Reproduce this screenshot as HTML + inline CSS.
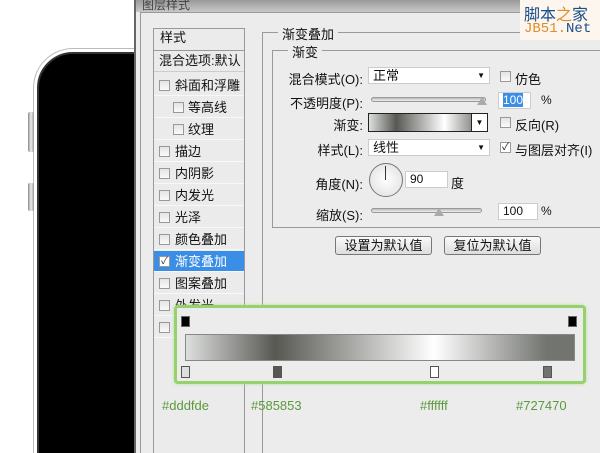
<!DOCTYPE html><html><head><meta charset="utf-8"><style>
*{margin:0;padding:0;box-sizing:border-box}
html,body{width:600px;height:453px;overflow:hidden}
body{background:#fff;position:relative;font-family:"Liberation Sans","Noto Sans CJK SC",sans-serif;font-size:12px;color:#111}
.a{position:absolute}
.cb{position:absolute;width:11px;height:11px;border:1px solid #999;background:linear-gradient(#e4e4e4,#fafafa)}
.it{position:absolute;left:154px;width:90px;height:21px;border-bottom:1px solid #f8f8f8;line-height:21px;font-size:13px}
.lbl{position:absolute;text-align:right;width:100px;left:263px;font-size:13px}
.in{position:absolute;background:#fff;border:1px solid #ccc;height:17px;line-height:15px;padding-left:4px}
.btn{position:absolute;height:19px;border:1px solid #777;border-radius:3px;background:linear-gradient(#fafafa,#ddd);text-align:center;line-height:17px;font-size:13px}
.hx{position:absolute;top:398px;color:#5b9a3c;font-size:13px}
</style></head><body>
<div class="a" style="left:33px;top:48px;width:130px;height:410px;border:1px solid #bbb;border-radius:40px 0 0 0;background:#fff"></div>
<div class="a" style="left:37px;top:52px;width:120px;height:410px;border-radius:36px 0 0 0;background:#000;border:2px solid #333"></div>
<div class="a" style="left:28px;top:112px;width:6px;height:40px;background:linear-gradient(90deg,#888,#eee,#999);border-radius:2px"></div>
<div class="a" style="left:28px;top:183px;width:6px;height:28px;background:linear-gradient(90deg,#888,#eee,#999);border-radius:2px"></div>
<div class="a" style="left:134px;top:0;width:466px;height:453px;background:#ececec;border-left:2px solid #666"></div>
<div class="a" style="left:136px;top:0;width:464px;height:12px;background:linear-gradient(#999,#c8c8c8)"></div>
<div class="a" style="left:142px;top:-4px;color:#444">图层样式</div>
<div class="a" style="left:140px;top:12px;width:460px;height:441px;border-left:1px solid #999;border-top:1px solid #999"></div>
<div class="a" style="left:153px;top:28px;width:92px;height:425px;border-left:1px solid #999;border-right:1px solid #999;background:#ebebeb"></div>
<div class="a" style="left:154px;top:28px;width:90px;height:20px;border-top:1px solid #999;padding-left:6px;line-height:18px;font-size:13px">样式</div>
<div class="a" style="left:154px;top:50px;width:90px;height:22px;border-top:1px solid #999;border-bottom:1px solid #ccc;padding-left:5px;line-height:20px;font-size:13px">混合选项:默认</div>
<div class="it" style="top:75px"><span class="cb" style="left:5px;top:5px"></span><span class="a" style="left:21px">斜面和浮雕</span></div>
<div class="it" style="top:97px"><span class="cb" style="left:19px;top:5px"></span><span class="a" style="left:34px">等高线</span></div>
<div class="it" style="top:119px"><span class="cb" style="left:19px;top:5px"></span><span class="a" style="left:34px">纹理</span></div>
<div class="it" style="top:141px"><span class="cb" style="left:5px;top:5px"></span><span class="a" style="left:21px">描边</span></div>
<div class="it" style="top:163px"><span class="cb" style="left:5px;top:5px"></span><span class="a" style="left:21px">内阴影</span></div>
<div class="it" style="top:185px"><span class="cb" style="left:5px;top:5px"></span><span class="a" style="left:21px">内发光</span></div>
<div class="it" style="top:207px"><span class="cb" style="left:5px;top:5px"></span><span class="a" style="left:21px">光泽</span></div>
<div class="it" style="top:229px"><span class="cb" style="left:5px;top:5px"></span><span class="a" style="left:21px">颜色叠加</span></div>
<div class="it" style="top:251px;background:#3a8ee6;color:#fff"><span class="cb" style="left:5px;top:5px;background:#fff;color:#333;font-size:10px;line-height:9px;text-align:center">✓</span><span class="a" style="left:21px">渐变叠加</span></div>
<div class="it" style="top:273px"><span class="cb" style="left:5px;top:5px"></span><span class="a" style="left:21px">图案叠加</span></div>
<div class="it" style="top:295px"><span class="cb" style="left:5px;top:5px"></span><span class="a" style="left:21px">外发光</span></div>
<div class="it" style="top:317px"><span class="cb" style="left:5px;top:5px"></span></div>
<div class="a" style="left:262px;top:32px;width:338px;height:421px;border-left:1px solid #999;border-top:1px solid #999"></div>
<div class="a" style="left:278px;top:24px;background:#ececec;padding:0 4px;font-size:13px">渐变叠加</div>
<div class="a" style="left:272px;top:50px;width:330px;height:178px;border:1px solid #999"></div>
<div class="a" style="left:288px;top:42px;background:#ececec;padding:0 4px;font-size:13px">渐变</div>
<div class="lbl" style="top:69px">混合模式(O):</div>
<div class="in" style="left:368px;top:67px;width:122px;font-size:13px">正常<span class="a" style="right:4px;top:0;font-size:8px">▼</span></div>
<span class="cb" style="left:500px;top:71px"></span><div class="a" style="left:515px;top:69px;font-size:13px">仿色</div>
<div class="lbl" style="top:93px">不透明度(P):</div>
<div class="a" style="left:371px;top:97px;width:115px;height:5px;border:1px solid #999;border-radius:3px;background:linear-gradient(#bbb,#eee)"></div>
<div class="a" style="left:477px;top:97px;width:0;height:0;border-left:5px solid transparent;border-right:5px solid transparent;border-bottom:8px solid #aaa"></div>
<div class="in" style="left:498px;top:92px;width:33px"><span style="background:#3a8ee6;color:#fff">100</span></div>
<div class="a" style="left:541px;top:93px">%</div>
<div class="lbl" style="top:115px">渐变:</div>
<div class="a" style="left:368px;top:113px;width:120px;height:19px;border:1px solid #222;background:linear-gradient(90deg,#dddfde,#585853 23%,#fff 64%,#727470 93%)"></div>
<div class="a" style="left:471px;top:113px;width:17px;height:19px;border:1px solid #222;background:#fff;font-size:8px;text-align:center;line-height:17px">▼</div>
<span class="cb" style="left:500px;top:117px"></span><div class="a" style="left:515px;top:115px;font-size:13px">反向(R)</div>
<div class="lbl" style="top:140px">样式(L):</div>
<div class="in" style="left:368px;top:139px;width:122px;font-size:13px">线性<span class="a" style="right:4px;top:0;font-size:8px">▼</span></div>
<span class="cb" style="left:500px;top:142px;background:#fff;font-size:10px;line-height:9px;text-align:center">✓</span><div class="a" style="left:515px;top:140px;font-size:13px">与图层对齐(I)</div>
<div class="lbl" style="top:174px">角度(N):</div>
<div class="a" style="left:369px;top:163px;width:34px;height:34px;border:1px solid #777;border-radius:50%;background:radial-gradient(#fff,#ddd)"></div>
<div class="a" style="left:385px;top:166px;width:1px;height:14px;background:#333"></div>
<div class="in" style="left:405px;top:171px;width:43px">90</div>
<div class="a" style="left:451px;top:173px;font-size:13px">度</div>
<div class="lbl" style="top:205px">缩放(S):</div>
<div class="a" style="left:371px;top:208px;width:111px;height:5px;border:1px solid #999;border-radius:3px;background:linear-gradient(#bbb,#eee)"></div>
<div class="a" style="left:434px;top:208px;width:0;height:0;border-left:5px solid transparent;border-right:5px solid transparent;border-bottom:8px solid #aaa"></div>
<div class="in" style="left:498px;top:203px;width:40px">100</div>
<div class="a" style="left:541px;top:204px">%</div>
<div class="btn" style="left:335px;top:236px;width:97px">设置为默认值</div>
<div class="btn" style="left:444px;top:236px;width:97px">复位为默认值</div>
<div class="a" style="left:520px;top:0;width:80px;height:40px;background:#fdf6ee"></div>
<div class="a" style="left:524px;top:1px;font-size:16px;color:#1a4f8a">脚本<span style="color:#e08a2a">之</span>家</div>
<div class="a" style="left:524px;top:21px;font-size:14px;color:#e08a2a;font-family:'Liberation Mono',monospace">JB51.<span style="color:#1a4f8a">Net</span></div>
<div class="a" style="left:174px;top:305px;width:412px;height:79px;border:3px solid #96d16e;border-radius:4px;background:#ececec;box-shadow:0 0 3px #b5e29a"></div>
<div class="a" style="left:185px;top:334px;width:390px;height:27px;border:1px solid #888;background:linear-gradient(90deg,#dddfde,#585853 23%,#fff 64%,#727470 93%,#727470)"></div>
<div class="a" style="left:181px;top:316px;width:9px;height:11px;background:#000;border:1px solid #666"></div>
<div class="a" style="left:568px;top:316px;width:9px;height:11px;background:#000;border:1px solid #666"></div>
<div class="a" style="left:181px;top:366px;width:9px;height:12px;background:#dddfde;border:1px solid #555"></div>
<div class="a" style="left:273px;top:366px;width:9px;height:12px;background:#585853;border:1px solid #555"></div>
<div class="a" style="left:430px;top:366px;width:9px;height:12px;background:#fff;border:1px solid #555"></div>
<div class="a" style="left:543px;top:366px;width:9px;height:12px;background:#727470;border:1px solid #555"></div>
<div class="hx" style="left:162px">#dddfde</div>
<div class="hx" style="left:251px">#585853</div>
<div class="hx" style="left:420px">#ffffff</div>
<div class="hx" style="left:516px">#727470</div>
</body></html>
